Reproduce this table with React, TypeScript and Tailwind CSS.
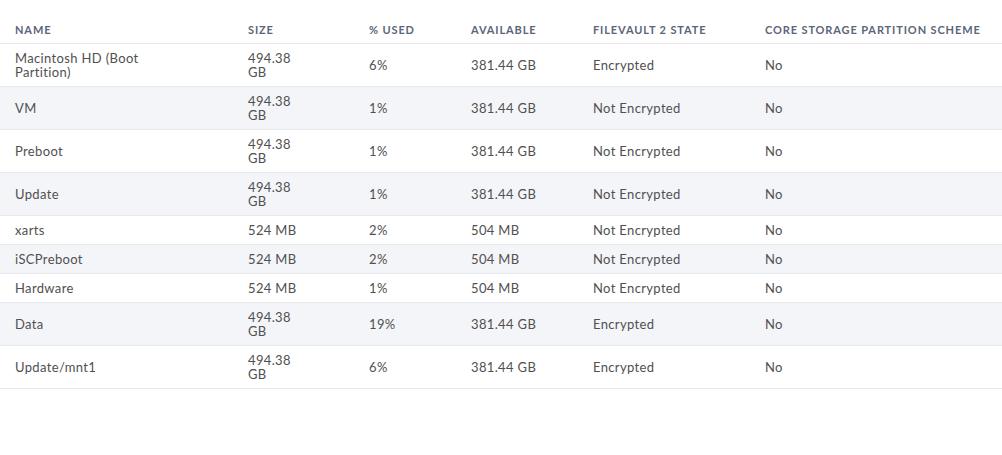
import React from "react";

type Volume = {
  name: string;
  size: string;
  used: string;
  available: string;
  fileVault: string;
  coreStorage: string;
};

const volumes: Volume[] = [
  { name: "Macintosh HD (Boot Partition)", size: "494.38 GB", used: "6%", available: "381.44 GB", fileVault: "Encrypted", coreStorage: "No" },
  { name: "VM", size: "494.38 GB", used: "1%", available: "381.44 GB", fileVault: "Not Encrypted", coreStorage: "No" },
  { name: "Preboot", size: "494.38 GB", used: "1%", available: "381.44 GB", fileVault: "Not Encrypted", coreStorage: "No" },
  { name: "Update", size: "494.38 GB", used: "1%", available: "381.44 GB", fileVault: "Not Encrypted", coreStorage: "No" },
  { name: "xarts", size: "524 MB", used: "2%", available: "504 MB", fileVault: "Not Encrypted", coreStorage: "No" },
  { name: "iSCPreboot", size: "524 MB", used: "2%", available: "504 MB", fileVault: "Not Encrypted", coreStorage: "No" },
  { name: "Hardware", size: "524 MB", used: "1%", available: "504 MB", fileVault: "Not Encrypted", coreStorage: "No" },
  { name: "Data", size: "494.38 GB", used: "19%", available: "381.44 GB", fileVault: "Encrypted", coreStorage: "No" },
  { name: "Update/mnt1", size: "494.38 GB", used: "6%", available: "381.44 GB", fileVault: "Encrypted", coreStorage: "No" },
];

const headers = ["Name", "Size", "% Used", "Available", "FileVault 2 State", "Core Storage Partition Scheme"];

const cell = "pl-[15px] py-[7px] align-middle text-[13px] leading-[14px] tracking-[0.35px] text-[#505050]";

const App: React.FC = () => {
  return (
    <div className="w-[1002px] h-[455px] bg-white font-['Lato','Liberation_Sans',sans-serif]">
      <table className="w-full table-fixed border-collapse">
        <colgroup>
          <col className="w-[233px]" />
          <col className="w-[121px]" />
          <col className="w-[102px]" />
          <col className="w-[122px]" />
          <col className="w-[172px]" />
          <col />
        </colgroup>
        <thead>
          <tr className="border-b border-[#e6e8ec]">
            {headers.map(h => (
              <th
                key={h}
                className="pl-[15px] pt-6 pb-[7px] text-left text-[11px] leading-3 font-bold uppercase tracking-[0.08em] text-[#5b6579] whitespace-nowrap"
              >
                {h}
              </th>
            ))}
          </tr>
        </thead>
        <tbody>
          {volumes.map((v, i) => (
            <tr key={v.name} className={`border-b border-[#e6e8ec] ${i % 2 === 1 ? "bg-[#f4f5f9]" : "bg-white"}`}>
              <td className={cell}>
                <div className="w-[150px]">{v.name}</div>
              </td>
              <td className={cell}>
                <div className="w-[56px]">{v.size}</div>
              </td>
              <td className={cell}>{v.used}</td>
              <td className={cell}>{v.available}</td>
              <td className={cell}>{v.fileVault}</td>
              <td className={cell}>{v.coreStorage}</td>
            </tr>
          ))}
        </tbody>
      </table>
    </div>
  );
};

export default App;
